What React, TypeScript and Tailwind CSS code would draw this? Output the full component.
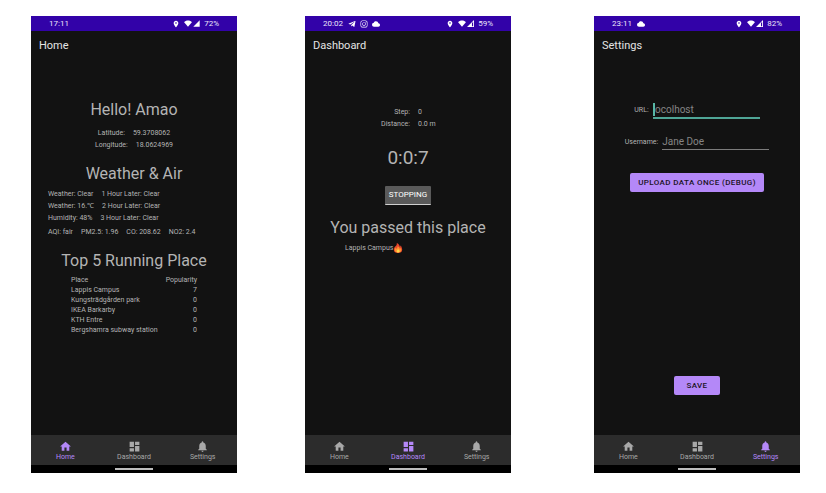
import type { ReactNode } from "react";
import { MdCloud, MdDashboard, MdHome, MdLocationOn, MdNotifications } from "react-icons/md";
import { FaInstagram, FaTelegramPlane } from "react-icons/fa";

type Tab = "Home" | "Dashboard" | "Settings";

const tabs = [
  { name: "Home", Icon: MdHome },
  { name: "Dashboard", Icon: MdDashboard },
  { name: "Settings", Icon: MdNotifications },
] as const;

const places = [
  { place: "Lappis Campus", popularity: 7 },
  { place: "Kungsträdgården park", popularity: 0 },
  { place: "IKEA Barkarby", popularity: 0 },
  { place: "KTH Entre", popularity: 0 },
  { place: "Bergshamra subway station", popularity: 0 },
];

function Wifi() {
  return (
    <svg viewBox="0 0 24 20" className="h-[7px] w-2" fill="currentColor" aria-hidden="true">
      <path d="M12 20 .3 6.500C2.500 2.500 7.500 1 12 1s9.500 1.500 11.700 5.500z" />
    </svg>
  );
}

function Signal({ full }: { full: boolean }) {
  return (
    <svg viewBox="0 0 24 24" className="size-[7px]" fill="currentColor" aria-hidden="true">
      {full ? (
        <path d="M1 23 23 1v22z" />
      ) : (
        <path fillRule="evenodd" d="M0 24 24 0v24zM17 10v11h4V7z" />
      )}
    </svg>
  );
}

function Flame() {
  return (
    <svg viewBox="0 0 24 24" className="size-[10px]" aria-hidden="true">
      <path
        fill="#e8472b"
        d="M9 0c1 4-1 6-3 8-3 3-4 5-4 8 0 5 4 8 10 8s10-3 10-8c0-4-2-6-3-10-2 1-2 3-2 5-1-5-3-9-8-11z"
      />
      <path
        fill="#ff9130"
        d="M11 8c0 4-2 5-3 6-1-1-1-2-1-3-2 2-3 4-3 6 0 4 4 6 8 6s8-2 8-6c0-2-1-4-2-5-1 1-1 2-2 2-1-2-2-5-5-6z"
      />
      <path fill="#ffd84a" d="M12 14c0 3-3 3-3 6 0 2 1 3 3 3s4-1 4-3c0-3-3-3-4-6z" />
    </svg>
  );
}

interface PhoneProps {
  tab: Tab;
  time: string;
  battery: string;
  fullSignal?: boolean;
  notices?: ReactNode;
  children: ReactNode;
}

function Phone({ tab, time, battery, fullSignal = false, notices, children }: PhoneProps) {
  return (
    <section className="flex min-w-0 flex-1 flex-col bg-[#121212] text-[#b4b4b4]">
      <div className="flex h-[15px] items-center bg-[#3202a8] pr-[18px] pl-[18px] text-[8px] leading-[15px] text-[#ece6fa]">
        <span>{time}</span>
        <span className="ml-[5px] flex items-center gap-1 text-white">{notices}</span>
        <span className="ml-auto flex items-center text-white">
          <MdLocationOn className="mr-1 size-2" />
          <Wifi />
          <span className="mr-1 ml-px">
            <Signal full={fullSignal} />
          </span>
        </span>
        <span>{battery}</span>
      </div>
      <h1 className="h-[30px] pl-2 text-[11px] leading-[30px] text-[#e4e4e4]">{tab}</h1>
      <div className="flex flex-1 flex-col">{children}</div>
      <nav className="flex h-[30px] bg-[#2c2c2c]">
        {tabs.map(({ name, Icon }) => (
          <a
            key={name}
            href={`#${name.toLowerCase()}`}
            aria-current={name === tab ? "page" : undefined}
            className={`flex flex-1 flex-col items-center pt-[5px] text-[7px] leading-[9px] ${
              name === tab ? "text-[#b488f8]" : "text-[#a8a8a8]"
            }`}
          >
            <Icon className="size-[13px]" />
            {name}
          </a>
        ))}
      </nav>
      <div className="flex h-2 items-center justify-center bg-black">
        <span className="h-[2px] w-[38px] bg-[#bdbdbd]" />
      </div>
    </section>
  );
}

function Heading({ children }: { children: ReactNode }) {
  return <h2 className="h-6 text-center text-[16px] leading-[26px] whitespace-nowrap">{children}</h2>;
}

function Home() {
  return (
    <div className="pt-9 text-[7px] leading-3 whitespace-nowrap">
      <Heading>Hello! Amao</Heading>
      <div className="mt-[6px] mb-[10px]">
        <p className="flex justify-center gap-2">
          <span>Latitude:</span>
          <span>59.3708062</span>
        </p>
        <p className="flex justify-center gap-2">
          <span>Longitude:</span>
          <span>18.0624969</span>
        </p>
      </div>
      <Heading>Weather &amp; Air</Heading>
      <div className="mt-[3px] pl-[17px]">
        <p className="flex gap-2">
          <span>Weather: Clear</span>
          <span>1 Hour Later: Clear</span>
        </p>
        <p className="flex gap-2">
          <span>Weather: 16.℃</span>
          <span>2 Hour Later: Clear</span>
        </p>
        <p className="flex gap-2">
          <span>Humidity: 48%</span>
          <span>3 Hour Later: Clear</span>
        </p>
        <p className="mt-[2px] flex gap-2">
          <span>AQI: fair</span>
          <span>PM2.5: 1.96</span>
          <span>CO: 208.62</span>
          <span>NO2: 2.4</span>
        </p>
      </div>
      <div className="mt-[10px]">
        <Heading>Top 5 Running Place</Heading>
      </div>
      <table className="mx-auto mt-[3px] w-[126px] leading-[10px]">
        <thead>
          <tr>
            <th className="p-0 text-left font-normal">Place</th>
            <th className="p-0 text-right font-normal">Popularity</th>
          </tr>
        </thead>
        <tbody>
          {places.map(({ place, popularity }) => (
            <tr key={place}>
              <td className="p-0">{place}</td>
              <td className="p-0 text-right">{popularity}</td>
            </tr>
          ))}
        </tbody>
      </table>
    </div>
  );
}

function Dashboard() {
  return (
    <div className="flex flex-col items-center pt-[45px] text-[7px] leading-3 whitespace-nowrap">
      <dl className="grid w-full grid-cols-2 gap-x-2 pl-3">
        <dt className="text-right">Step:</dt>
        <dd>0</dd>
        <dt className="text-right">Distance:</dt>
        <dd>0.0 m</dd>
      </dl>
      <p className="mt-4 text-[19px] leading-6">0:0:7</p>
      <button
        type="button"
        className="mt-4 h-[19px] w-[46px] rounded-[1px] border-b border-[#d0d0d0] bg-[#5a5a5a] text-[8px] leading-[18px] text-white"
      >
        STOPPING
      </button>
      <div className="mt-[10px]">
        <Heading>You passed this place</Heading>
      </div>
      <p className="mt-[3px] flex items-center self-start pl-10">
        Lappis Campus
        <Flame />
      </p>
    </div>
  );
}

function Settings() {
  return (
    <form className="flex flex-1 flex-col items-center pt-10 pb-10 text-[7px] leading-4">
      <div className="flex items-center gap-1">
        <label htmlFor="url">URL:</label>
        <div className="relative">
          <input
            id="url"
            type="text"
            placeholder="locolhost"
            className="block h-[18px] w-[107px] border-b-2 border-[#4fa596] text-[10px] outline-none placeholder:text-[#858585]"
          />
          <span className="absolute top-[2px] left-0 h-[13px] w-[2px] bg-[#58b8a6]" />
        </div>
      </div>
      <div className="mt-[14px] flex items-center gap-1">
        <label htmlFor="username">Username:</label>
        <input
          id="username"
          type="text"
          placeholder="Jane Doe"
          className="block h-[17px] w-[107px] border-b border-[#7c7c7c] text-[10px] outline-none placeholder:text-[#858585]"
        />
      </div>
      <button
        type="button"
        className="mt-[23px] h-[19px] rounded-[2px] bg-[#b488f8] px-2 text-[8px] font-medium tracking-wider text-[#1b1424]"
      >
        UPLOAD DATA ONCE (DEBUG)
      </button>
      <button
        type="submit"
        className="mt-auto h-[19px] w-[46px] rounded-[2px] bg-[#b488f8] text-[8px] font-medium tracking-wider text-[#1b1424]"
      >
        SAVE
      </button>
    </form>
  );
}

export default function App() {
  return (
    <main className="flex min-h-screen bg-white pt-4 pr-[26px] pb-5 pl-[31px] font-['Roboto',sans-serif]">
      <Phone tab="Home" time="17:11" battery="72%" fullSignal>
        <Home />
      </Phone>
      <div className="w-[68px] shrink-0" />
      <Phone
        tab="Dashboard"
        time="20:02"
        battery="59%"
        notices={
          <>
            <FaTelegramPlane className="size-2" />
            <FaInstagram className="size-2" />
            <MdCloud className="size-2" />
          </>
        }
      >
        <Dashboard />
      </Phone>
      <div className="w-[83px] shrink-0" />
      <Phone tab="Settings" time="23:11" battery="82%" notices={<MdCloud className="size-2" />}>
        <Settings />
      </Phone>
    </main>
  );
}
